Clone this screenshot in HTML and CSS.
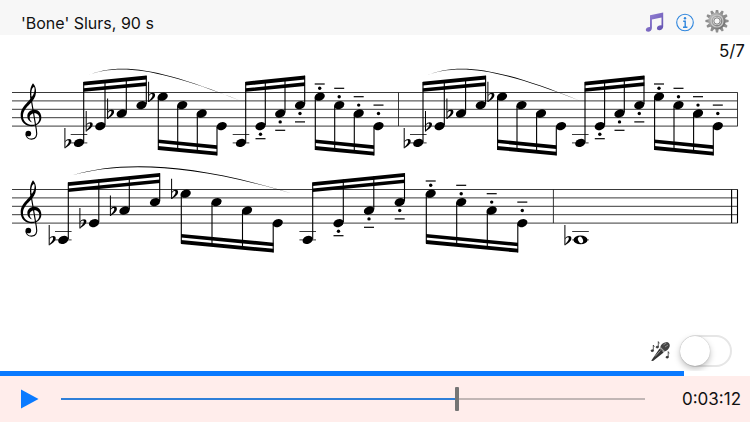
FILE: index.html
```
<!DOCTYPE html>
<html lang="en">
  <head>
    <meta charset="UTF-8" />
    <meta name="viewport" content="width=device-width, initial-scale=1.0" />
    <title>'Bone' Slurs, 90 s</title>
    <link rel="stylesheet" href="styles.css">
  </head>
  <body>
    <header class="top-bar">
      <h1>'Bone' Slurs, 90 s</h1>
      <div class="top-actions">
        <button type="button" class="icon-btn" aria-label="Music">
          <svg width="20" height="22" viewBox="0 0 20 22">
            <defs>
              <linearGradient id="purple" x1="0" y1="0" x2="1" y2="1">
                <stop offset="0" stop-color="#9a86d8" />
                <stop offset="1" stop-color="#5f4fae" />
              </linearGradient>
            </defs>
            <path
              fill="url(#purple)"
              d="M5 4.2 L18.2 1.6 V15.6 C18.2 18 16.2 19.3 14.3 19.3 C12.8 19.3 11.9 18.5 11.9 17.3 C11.9 15.2 14.2 14.2 16.5 14.4 V6.6 L6.9 8.4 V17 C6.9 19.4 5 20.8 3.2 20.8 C1.7 20.8 .8 20 .8 18.8 C.8 16.8 2.9 15.8 5 15.9 Z"
            />
          </svg>
        </button>
        <button type="button" class="icon-btn" aria-label="Info">
          <svg width="20" height="22" viewBox="0 0 20 22">
            <circle cx="10" cy="11.5" r="8.3" fill="none" stroke="#2f86dd" stroke-width="1.1" />
            <circle cx="10" cy="7.2" r="1.2" fill="#2f86dd" />
            <path fill="none" stroke="#2f86dd" stroke-width="1.4" d="M8.2 10.2 H10.2 V16 M8 16.2 H12.4" />
          </svg>
        </button>
        <button type="button" class="icon-btn" aria-label="Settings">
          <svg width="24" height="24" viewBox="-12 -11 24 24">
            <defs>
              <linearGradient id="steel" x1="0" y1="0" x2="1" y2="1">
                <stop offset="0" stop-color="#b9b9b9" />
                <stop offset="1" stop-color="#6f6f6f" />
              </linearGradient>
              <path id="teeth" d="M-1.9 -7 L-1.1 -11.6 H1.1 L1.9 -7 Z M-1.9 7 L-1.1 11.6 H1.1 L1.9 7 Z" />
            </defs>
            <g fill="#8e8e8e">
              <use href="#teeth" />
              <use href="#teeth" transform="rotate(30)" />
              <use href="#teeth" transform="rotate(60)" />
              <use href="#teeth" transform="rotate(90)" />
              <use href="#teeth" transform="rotate(120)" />
              <use href="#teeth" transform="rotate(150)" />
            </g>
            <circle r="6.3" fill="none" stroke="url(#steel)" stroke-width="4.6" />
            <circle r="6" fill="none" stroke="#c8c8c8" stroke-width="1.2" />
            <circle r="3.2" fill="#f7f7f7" stroke="#777" stroke-width="1" />
          </svg>
        </button>
      </div>
    </header>

    <main class="score">
      <p class="page-count">5/7</p>

      <!-- first system: two identical measures -->
      <svg class="system" viewBox="0 0 750 100" role="img" aria-label="First system">
        <defs>
          <ellipse id="head" rx="5.3" ry="3.9" transform="rotate(-22)" />
          <g id="flat">
            <path d="M-14.6 -15 h1 v20.4 h-1 Z" />
            <path d="M-13.8 -1.8 C-12 -4.6 -7.4 -4.9 -7.6 -1.5 C-7.7 1.4 -11 3 -13.8 5.4 V4 C-11.6 2 -10.2 0 -10.2 -1.5 C-10.2 -3.4 -12.6 -2.8 -13.8 -.4 Z" />
          </g>
          <path id="ledger" class="line" d="M-8.3 42 H8.3 M-8.3 50.4 H8.3" />
          <!-- staccato dot with tenuto, below and above the head -->
          <g id="under">
            <circle cy="8.4" r="1.7" />
            <path d="M-5 16.2 H5 V17.4 H-5 Z" />
          </g>
          <g id="under-low">
            <circle cy="8.2" r="1.7" />
            <path d="M-5 12 H5 V13.2 H-5 Z" />
          </g>
          <g id="over-high">
            <circle cy="-8.5" r="1.7" />
            <path d="M-5 -13.3 H5 V-12.1 H-5 Z" />
          </g>
          <g id="over">
            <circle cy="-8.4" r="1.7" />
            <path d="M-5 -17.4 H5 V-16.2 H-5 Z" />
          </g>
          <g id="over-far">
            <circle cy="-12.6" r="1.7" />
            <path d="M-5 -21.6 H5 V-20.4 H-5 Z" />
          </g>
          <g id="clef" transform="scale(.3333) translate(0 -97)">
            <path
              fill-rule="evenodd"
              d="M98 187 C88 184 82 178 82 168 C82 157 91 149 103 149 C116 149 124 159 124 172 C124 188 111 198 95 198 C76 198 62 185 62 165 C62 148 72 137 82 126 C86 122 90 118 92 114 C88 98 90 80 99 69 C106 76 109 86 108 98 C107 112 99 122 90 131 C79 143 69 152 69 168 C69 184 82 194 96 194 C108 194 118 187 118 174 C118 166 113 159 104 159 C96 159 89 164 89 172 C89 180 93 184 98 187 Z M95 111 C93 98 94 84 102 80 C106 88 103 101 95 111 Z"
            />
            <path fill="none" stroke="#000" stroke-width="3.5" d="M92 108 L109 208 C113 228 107 237 95 237 C84 237 78 230 78 222" />
            <circle cx="85" cy="220" r="8.5" />
          </g>
          <path id="staff" class="line" d="M12 0 H737.7 M12 8.4 H737.7 M12 16.8 H737.7 M12 25.2 H737.7 M12 33.6 H737.7" />

          <g id="beam-up">
            <path d="M0 -10.8 L63 -17 V-13 L0 -7 Z M0 -4.2 L63 -10.3 V-6.5 L0 -.7 Z" />
          </g>
          <g id="beam-down">
            <path d="M0 47 L59 52.8 V56.4 L0 50.6 Z M0 53.6 L59 59.2 V63 L0 57.4 Z" />
          </g>

          <g id="measure">
            <path d="M86.5 -17 C120 -30.7 160 -24.6 240 8 C160 -23.4 120 -29.3 86.5 -17 Z" />
            <use href="#flat" x="79" y="50.4" />
            <use href="#flat" x="100.3" y="33.6" />
            <use href="#flat" x="121.7" y="21" />
            <use href="#flat" x="162.7" y="4.2" />

            <use href="#ledger" x="79" />
            <use href="#head" x="79" y="50.4" />
            <use href="#head" x="100.3" y="33.6" />
            <use href="#head" x="121.7" y="21" />
            <use href="#head" x="141.5" y="12.6" />
            <path class="stem" d="M83.7 -10.5 V49.5 M105 -12 V32.5 M126.3 -14 V20 M146.3 -16.8 V11.5" />
            <use href="#beam-up" x="83.5" />

            <use href="#head" x="162.7" y="4.2" />
            <use href="#head" x="182.2" y="12.6" />
            <use href="#head" x="201.7" y="21" />
            <use href="#head" x="221.7" y="33.6" />
            <path class="stem" d="M158.3 5 V57.4 M177.7 13.5 V58 M197.3 22 V60 M217 34.5 V63" />
            <use href="#beam-down" x="158" />

            <use href="#ledger" x="241" />
            <use href="#head" x="241" y="50.4" />
            <use href="#head" x="260.5" y="33.6" />
            <use href="#head" x="280.2" y="21" />
            <use href="#head" x="300" y="12.6" />
            <path class="stem" d="M245.7 -10.5 V49.5 M265.3 -12 V32.5 M285 -14 V20 M304.7 -16.8 V11.5" />
            <path d="M245.5 -10.8 L305 -17 V-13 L245.5 -7 Z M245.5 -4.2 L305 -10.3 V-6.5 L245.5 -.7 Z" />
            <use href="#under-low" x="260.5" y="33.6" />
            <use href="#under" x="280.2" y="21" />
            <use href="#under" x="300" y="12.6" />

            <use href="#head" x="319.7" y="4.2" />
            <use href="#head" x="339.2" y="12.6" />
            <use href="#head" x="358.7" y="21" />
            <use href="#head" x="378.5" y="33.6" />
            <path class="stem" d="M315.3 5 V57.4 M334.7 13.5 V58 M354.3 22 V60 M374 34.5 V63" />
            <use href="#beam-down" x="315" />
            <use href="#over-high" x="319.7" y="4.2" />
            <use href="#over" x="339.2" y="12.6" />
            <use href="#over" x="358.7" y="21" />
            <use href="#over-far" x="378.5" y="33.6" />
          </g>
        </defs>

        <g transform="translate(0 32.5)">
          <use href="#staff" />
          <use href="#clef" />
          <use href="#measure" />
          <path class="line" d="M398.5 0 V33.6 M737.5 0 V33.6" />
          <use href="#measure" x="339.3" />
        </g>
      </svg>

      <!-- second system: the figure once more, then the final whole note -->
      <svg class="system" viewBox="0 0 750 100" role="img" aria-label="Second system">
        <g transform="translate(0 29.5)">
          <use href="#staff" />
          <use href="#clef" />
          <path d="M71.7 -14 C125 -30.3 200 -26 305 8 C200 -24.8 125 -28.9 71.7 -14 Z" />
          <use href="#flat" x="63.3" y="50.4" />
          <use href="#flat" x="94" y="33.6" />
          <use href="#flat" x="124.5" y="21" />
          <use href="#flat" x="185.7" y="4.2" />

          <use href="#ledger" x="63.3" />
          <use href="#head" x="63.3" y="50.4" />
          <use href="#head" x="94" y="33.6" />
          <use href="#head" x="124.5" y="21" />
          <use href="#head" x="155" y="12.6" />
          <path class="stem" d="M68.3 -7 V49.5 M98.8 -10 V32.5 M129.3 -13 V20 M159.7 -16.3 V11.5" />
          <path d="M68 -7.3 L160 -16.5 V-12.7 L68 -3.6 Z M68 -.9 L160 -10 V-6.4 L68 2.6 Z" />

          <use href="#head" x="185.7" y="4.2" />
          <use href="#head" x="216.5" y="12.6" />
          <use href="#head" x="247" y="21" />
          <use href="#head" x="277.7" y="33.6" />
          <path class="stem" d="M181.3 5 V54 M212 13.5 V56 M242.5 22 V59 M273.2 34.5 V63" />
          <path d="M181 44.4 L273.5 53.2 V56.8 L181 48 Z M181 50.6 L273.5 59.3 V63.1 L181 54.4 Z" />

          <use href="#ledger" x="307.7" />
          <use href="#head" x="307.7" y="50.4" />
          <use href="#head" x="338.5" y="33.6" />
          <use href="#head" x="369" y="21" />
          <use href="#head" x="399.7" y="12.6" />
          <path class="stem" d="M312.7 -7 V49.5 M343.3 -10 V32.5 M373.8 -13 V20 M404.5 -16.3 V11.5" />
          <path d="M312.5 -7.3 L404.8 -16.5 V-12.7 L312.5 -3.6 Z M312.5 -.9 L404.8 -10 V-6.4 L312.5 2.6 Z" />
          <use href="#under-low" x="338.5" y="33.6" />
          <use href="#under" x="369" y="21" />
          <use href="#under" x="399.7" y="12.6" />

          <use href="#head" x="430.7" y="4.2" />
          <use href="#head" x="461.2" y="12.6" />
          <use href="#head" x="491.7" y="21" />
          <use href="#head" x="522.3" y="33.6" />
          <path class="stem" d="M426.3 5 V54 M456.7 13.5 V56 M487.3 22 V59 M517.8 34.5 V63" />
          <path d="M426 44.4 L518 53.2 V56.8 L426 48 Z M426 50.6 L518 59.3 V63.1 L426 54.4 Z" />
          <use href="#over-high" x="430.7" y="4.2" />
          <use href="#over" x="461.2" y="12.6" />
          <use href="#over" x="491.7" y="21" />
          <use href="#over-far" x="522.3" y="33.6" />

          <path class="line" d="M553.4 0 V33.6" />
          <use href="#flat" x="579" y="50.4" />
          <use href="#ledger" x="580.5" />
          <ellipse cx="580.5" cy="50.4" rx="7" ry="4.3" />
          <ellipse cx="580.5" cy="50.4" rx="2.3" ry="3.4" fill="#fff" transform="rotate(-28 580.5 50.4)" />
          <path class="stem" d="M731.6 0 V33.6 M737.5 0 V33.6" />
        </g>
      </svg>
    </main>

    <div class="mic-row">
      <label for="mic" aria-label="Microphone">
        <svg width="22" height="24" viewBox="0 0 22 24">
          <path d="M1.2 21.8 L9.6 9.6 L13.6 13.4 L3 22 Z" fill="#333" />
          <path d="M5 17.5 L10.5 11.5" stroke="#999" stroke-width="1" />
          <ellipse cx="15" cy="7.8" rx="5.4" ry="4" fill="#444" transform="rotate(-42 15 7.8)" />
          <path d="M10.2 8.5 L14.5 12.6" stroke="#aaa" stroke-width="1.2" />
          <path d="M13.5 5.8 L16.5 4 M15 8 L18 6" stroke="#8a8a8a" stroke-width="1" />
          <g fill="#333" stroke="#333" stroke-width=".8">
            <path d="M3.3 11.5 V6 L4.3 7.8 M8.3 8 V2.6 L9.3 4.4 M18.2 18 V12.6 L19.2 14.4" fill="none" />
            <ellipse cx="2.3" cy="11.7" rx="1.2" ry=".9" />
            <ellipse cx="7.3" cy="8.1" rx="1.2" ry=".9" />
            <ellipse cx="17.2" cy="18.2" rx="1.2" ry=".9" />
          </g>
        </svg>
      </label>
      <input type="checkbox" role="switch" id="mic" class="switch">
    </div>

    <progress class="session" max="100" value="91.2" aria-label="Session progress"></progress>

    <footer class="transport">
      <button type="button" class="play" aria-label="Play">
        <svg width="18" height="20" viewBox="0 0 18 20">
          <path d="M0 .5 L17.5 10 L0 19.5 Z" fill="#0a7aff" />
        </svg>
      </button>
      <input type="range" class="seek" min="0" max="100" value="68" style="--value: 68%" aria-label="Position">
      <output class="time">0:03:12</output>
    </footer>
  </body>
</html>
```
FILE: styles.css
```
:root {
  --blue: #0a7aff;
  --bar: #f7f7f7;
  --transport: #ffedeb;
}

* {
  margin: 0;
  padding: 0;
  box-sizing: border-box;
}

body {
  min-height: 100vh;
  display: flex;
  flex-direction: column;
  background: #fff;
  color: #111;
  font-family: Inter, "Liberation Sans", sans-serif;
  font-size: 17px;
  line-height: 24px;
}

button {
  border: 0;
  background: none;
  cursor: pointer;
}

svg {
  display: block;
}

/* Title bar */
.top-bar {
  display: flex;
  align-items: flex-end;
  justify-content: space-between;
  height: 35px;
  padding: 0 21px;
  background: var(--bar);
}

.top-bar h1 {
  font-size: 16px;
  font-weight: 400;
}

.top-actions {
  display: flex;
  align-items: center;
  gap: 10px;
  height: 35px;
  padding-top: 8px;
}

/* Score */
.score {
  flex: 1;
}

.page-count {
  height: 25px;
  padding: 4px 5px 0;
  text-align: right;
}

.system {
  width: 100%;
  height: auto;
}

.line {
  fill: none;
  stroke: #222;
  stroke-width: 0.9;
}

.stem {
  fill: none;
  stroke: #000;
  stroke-width: 1.1;
}

/* Microphone switch */
.mic-row {
  display: flex;
  align-items: center;
  justify-content: flex-end;
  gap: 8px;
  padding: 0 18px 4px;
}

.switch {
  appearance: none;
  display: flex;
  align-items: center;
  width: 52px;
  height: 32px;
  border: 2px solid #e6e6e6;
  border-radius: 16px;
  background: #fff;
}

.switch::before {
  content: "";
  width: 30px;
  height: 30px;
  margin: 0 -2px;
  border-radius: 50%;
  background: #fff;
  box-shadow: 0 0 1px rgba(0, 0, 0, 0.3), 0 3px 6px rgba(0, 0, 0, 0.25);
}

.switch:checked {
  justify-content: flex-end;
  background: #4cd964;
}

/* Session progress */
.session {
  appearance: none;
  display: block;
  width: 100%;
  height: 5px;
  border: 0;
}

.session::-webkit-progress-bar {
  background: #fff;
}

.session::-webkit-progress-value {
  background: var(--blue);
}

/* Transport */
.transport {
  display: flex;
  align-items: center;
  height: 46px;
  padding: 0 9px 0 21px;
  background: var(--transport);
}

.play {
  margin-right: 22px;
}

.seek {
  appearance: none;
  flex: 1;
  min-width: 0;
  height: 24px;
  background: linear-gradient(
      to right,
      #2f7fd8 var(--value),
      #c2b6b5 var(--value)
    )
    center / 100% 2px no-repeat;
}

.seek::-webkit-slider-thumb {
  appearance: none;
  width: 4px;
  height: 24px;
  border-radius: 1px;
  background: #757575;
}

.time {
  width: 96px;
  text-align: right;
}
```
